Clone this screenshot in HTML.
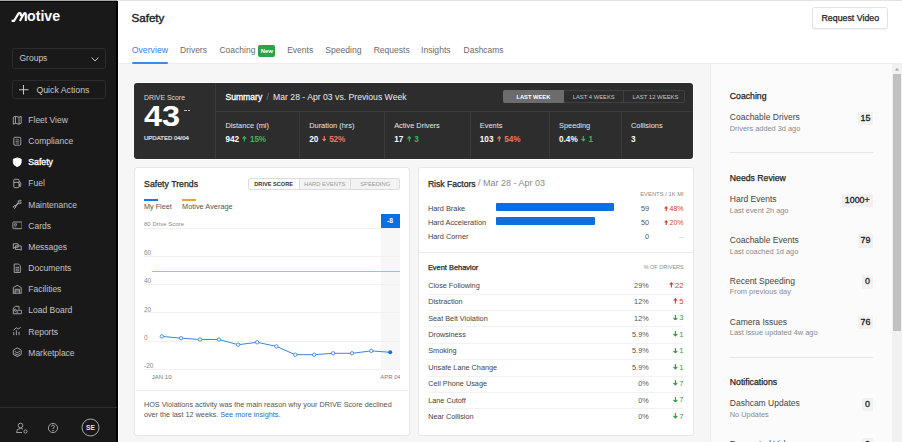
<!DOCTYPE html><html><head><meta charset="utf-8"><style>
html,body{margin:0;padding:0;width:902px;height:442px;overflow:hidden;background:#fff}
body{position:relative;font-family:"Liberation Sans",sans-serif}
.t{position:absolute;line-height:1;white-space:nowrap}
.r{position:absolute}
</style></head><body>
<div class="r" style="left:0px;top:0px;width:117px;height:1px;background:#a9a9a9"></div>
<div class="r" style="left:117px;top:0px;width:785px;height:1px;background:#e3e3e3"></div>
<div class="r" style="left:0px;top:1px;width:116px;height:441px;background:#191919"></div>
<div class="r" style="left:116px;top:1px;width:1.5999999999999943px;height:441px;background:#000"></div>
<div class="r" style="left:0px;top:1px;width:117px;height:1px;background:#000"></div>
<div class="r" style="left:117.6px;top:1px;width:784.4px;height:63px;background:#fff"></div>
<div class="r" style="left:117.6px;top:64px;width:1.4000000000000057px;height:378px;background:#fff"></div>
<div class="r" style="left:119px;top:64px;width:591px;height:378px;background:#f6f6f6"></div>
<div class="r" style="left:118px;top:63px;width:784px;height:1px;background:#efefef"></div>
<div class="r" style="left:710px;top:64px;width:182px;height:378px;background:#fbfbfb"></div>
<div class="r" style="left:710px;top:64px;width:1px;height:378px;background:#ececec"></div>
<div class="r" style="left:892px;top:64px;width:10px;height:378px;background:#f1f1f1"></div>
<div class="r" style="left:893px;top:74px;width:8px;height:257px;background:#c1c1c1"></div>
<svg class="r" style="left:892px;top:64px" width="10" height="10"><path d="M3 6.5 L5 4 L7 6.5Z" fill="#a3a3a3"/></svg>
<svg class="r" style="left:0;top:0" width="40" height="30" viewBox="0 0 40 30">
<path d="M11.6 20.9 H14 L18.3 13.9 Q18.8 13.1 19.6 13.1 H20 Q20.9 13.1 20.9 14 V16.3 M19.9 20.9 L23.7 14 Q24.1 13.1 24.9 13.1 Q25.8 13.1 25.8 14 V21" stroke="#fff" stroke-width="2.1" fill="none" stroke-linejoin="round"/>
</svg>
<div class="t" style="left:27.00px;top:9.18px;font-size:14.2px;color:#fff;font-weight:700;letter-spacing:0px">otive</div>
<div class="r" style="left:12px;top:48px;width:94px;height:21px;border:1px solid #2c2c2c;border-radius:3px;box-sizing:border-box"></div>
<div class="t" style="left:19.50px;top:54.20px;font-size:8.5px;color:#c8c8c8;font-weight:400;">Groups</div>
<svg class="r" style="left:90px;top:55px" width="10" height="8"><path d="M1.5 2.5 L5 6 L8.5 2.5" stroke="#bdbdbd" stroke-width="1" fill="none"/></svg>
<div class="r" style="left:12px;top:80px;width:94px;height:19px;border:1px solid #2c2c2c;border-radius:3px;box-sizing:border-box"></div>
<svg class="r" style="left:18px;top:84px" width="12" height="12"><path d="M5.5 1 V10.5 M1 5.75 H10.5" stroke="#c8c8c8" stroke-width="1" fill="none"/></svg>
<div class="t" style="left:36.40px;top:85.79px;font-size:8.75px;color:#c8c8c8;font-weight:400;">Quick Actions</div>
<div class="t" style="left:28.30px;top:116.00px;font-size:8.5px;color:#c4c4c4;font-weight:400;">Fleet View</div>
<div class="t" style="left:28.30px;top:137.15px;font-size:8.5px;color:#c4c4c4;font-weight:400;">Compliance</div>
<div class="t" style="left:28.30px;top:158.14px;font-size:8.7px;color:#fff;font-weight:400;-webkit-text-stroke:0.35px #fff;">Safety</div>
<div class="t" style="left:28.30px;top:179.45px;font-size:8.5px;color:#c4c4c4;font-weight:400;">Fuel</div>
<div class="t" style="left:28.30px;top:200.60px;font-size:8.5px;color:#c4c4c4;font-weight:400;">Maintenance</div>
<div class="t" style="left:28.30px;top:221.75px;font-size:8.5px;color:#c4c4c4;font-weight:400;">Cards</div>
<div class="t" style="left:28.30px;top:242.90px;font-size:8.5px;color:#c4c4c4;font-weight:400;">Messages</div>
<div class="t" style="left:28.30px;top:264.05px;font-size:8.5px;color:#c4c4c4;font-weight:400;">Documents</div>
<div class="t" style="left:28.30px;top:285.20px;font-size:8.5px;color:#c4c4c4;font-weight:400;">Facilities</div>
<div class="t" style="left:28.30px;top:306.35px;font-size:8.5px;color:#c4c4c4;font-weight:400;">Load Board</div>
<div class="t" style="left:28.30px;top:327.50px;font-size:8.5px;color:#c4c4c4;font-weight:400;">Reports</div>
<div class="t" style="left:28.30px;top:348.65px;font-size:8.5px;color:#c4c4c4;font-weight:400;">Marketplace</div>
<svg class="r" style="left:11.6px;top:114.60px" width="10.5" height="10.5" viewBox="0 0 12 12" fill="none" stroke="#ababab" stroke-width="1.05"><path d="M1.5 2.5 L4 1.5 L8 2.5 L10.5 1.5 V9.5 L8 10.5 L4 9.5 L1.5 10.5Z M4 1.5 V9.5 M8 2.5 V10.5"/></svg>
<svg class="r" style="left:11.6px;top:135.75px" width="10.5" height="10.5" viewBox="0 0 12 12" fill="none" stroke="#ababab" stroke-width="1.05"><rect x="2" y="1.5" width="8" height="9" rx="1.2"/><path d="M4 4.3 H8 M4 6.2 H8 M4 8.1 H8" stroke-width="0.8"/></svg>
<svg class="r" style="left:11.6px;top:156.90px" width="10.5" height="10.5" viewBox="0 0 12 12" fill="none" stroke="#ababab" stroke-width="1.05"><path d="M6 1 L10.5 2.5 V6 Q10.5 9.5 6 11 Q1.5 9.5 1.5 6 V2.5Z" fill="#fff" stroke="#fff"/></svg>
<svg class="r" style="left:11.6px;top:178.05px" width="10.5" height="10.5" viewBox="0 0 12 12" fill="none" stroke="#ababab" stroke-width="1.05"><rect x="2" y="1.5" width="6" height="9.5" rx="1"/><path d="M2 5 H8 M8 4 L10 5.5 V9 Q10 10 9.2 10 Q8.5 10 8.5 9 V7"/></svg>
<svg class="r" style="left:11.6px;top:199.20px" width="10.5" height="10.5" viewBox="0 0 12 12" fill="none" stroke="#ababab" stroke-width="1.05"><path d="M3.2 8.8 L7.4 4.6" stroke-width="1.5"/><path d="M7.1 2.2 Q8.6 0.9 10.4 1.7 L8.7 3.4 L8.7 3.4 L10.3 5 Q11.1 3.3 9.8 4.9 Q8.4 5.9 7.1 4.9 Z M1.2 9 L2.9 7.4 L4.6 9.1 L3 10.8Z"/></svg>
<svg class="r" style="left:11.6px;top:220.35px" width="10.5" height="10.5" viewBox="0 0 12 12" fill="none" stroke="#ababab" stroke-width="1.05"><rect x="1" y="2.3" width="10.5" height="7.6" rx="0.8"/><path d="M2.8 7.8 H5 M2.8 4.3 H5.2 V6 H2.8Z" stroke-width="0.8"/></svg>
<svg class="r" style="left:11.6px;top:241.50px" width="10.5" height="10.5" viewBox="0 0 12 12" fill="none" stroke="#ababab" stroke-width="1.05"><path d="M1.5 2 H7 V6 H3.5 L1.5 7.5Z M4 4.5 H10.5 V9.5 L9 8.5 H4Z"/></svg>
<svg class="r" style="left:11.6px;top:262.65px" width="10.5" height="10.5" viewBox="0 0 12 12" fill="none" stroke="#ababab" stroke-width="1.05"><path d="M2.5 1.2 H7.5 L9.5 3.2 V10.8 H2.5Z M4 5 H8 M4 7 H8 M4 9 H8"/></svg>
<svg class="r" style="left:11.6px;top:283.80px" width="10.5" height="10.5" viewBox="0 0 12 12" fill="none" stroke="#ababab" stroke-width="1.05"><path d="M1.5 10.5 V4 L6 1.5 L10.5 4 V10.5 M1 10.5 H11 M3.5 10.5 V6 H8.5 V10.5 M3.5 8 H8.5"/></svg>
<svg class="r" style="left:11.6px;top:304.95px" width="10.5" height="10.5" viewBox="0 0 12 12" fill="none" stroke="#ababab" stroke-width="1.05"><path d="M1.5 10 V3.5 L4 1.5 H8 V5 M1.5 10 H6"/><rect x="6" y="6" width="5" height="4" rx="0.5"/><circle cx="3.8" cy="6" r="1.2"/></svg>
<svg class="r" style="left:11.6px;top:326.10px" width="10.5" height="10.5" viewBox="0 0 12 12" fill="none" stroke="#ababab" stroke-width="1.05"><path d="M2 10.5 V7 M5 10.5 V5 M8 10.5 V6.5 M1.5 5 L5 2 L7 3.5 L10 1.5"/></svg>
<svg class="r" style="left:11.6px;top:347.25px" width="10.5" height="10.5" viewBox="0 0 12 12" fill="none" stroke="#ababab" stroke-width="1.05"><path d="M6 1 L10.5 3.5 V8.5 L6 11 L1.5 8.5 V3.5Z M3 5 L6 6.5 L9 5 M3 7.5 L6 9 L9 7.5"/></svg>
<div class="r" style="left:0px;top:407px;width:117px;height:1px;background:#2e2e2e"></div>
<svg class="r" style="left:15px;top:421px" width="14" height="14" viewBox="0 0 14 14" fill="none" stroke="#aaa" stroke-width="0.9"><circle cx="5.5" cy="4.5" r="2.3"/><path d="M1.5 11.5 Q1.5 7.5 5.5 7.5 Q7 7.5 8 8.2 M1.5 11.5 H7"/><circle cx="10.5" cy="10.5" r="1.6"/></svg>
<svg class="r" style="left:47px;top:422px" width="12" height="12" viewBox="0 0 12 12" fill="none" stroke="#aaa" stroke-width="0.9"><circle cx="6" cy="6" r="4.6"/><path d="M4.5 4.6 Q4.5 3.2 6 3.2 Q7.5 3.2 7.5 4.6 Q7.5 5.5 6 6.2 V7"/><circle cx="6" cy="8.6" r="0.4" fill="#aaa"/></svg>
<svg class="r" style="left:81px;top:418px" width="19" height="19" viewBox="0 0 19 19" fill="none"><circle cx="9.5" cy="9.5" r="8.5" stroke="#bbb" stroke-width="0.9"/></svg>
<div class="t" style="left:90.50px;transform:translateX(-50%);top:424.53px;font-size:6.7px;color:#e0e0e0;font-weight:700;">SE</div>
<div class="t" style="left:131.50px;top:12.18px;font-size:11.6px;color:#222;font-weight:400;-webkit-text-stroke:0.4px #222;">Safety</div>
<div class="t" style="left:131.70px;top:45.81px;font-size:8.73px;color:#2d86ec;font-weight:400;">Overview</div>
<div class="t" style="left:180.00px;top:45.98px;font-size:8.53px;color:#6b6b6b;font-weight:400;">Drivers</div>
<div class="t" style="left:219.40px;top:45.99px;font-size:8.52px;color:#6b6b6b;font-weight:400;">Coaching</div>
<div class="t" style="left:287.20px;top:46.00px;font-size:8.5px;color:#6b6b6b;font-weight:400;">Events</div>
<div class="t" style="left:325.20px;top:45.92px;font-size:8.6px;color:#6b6b6b;font-weight:400;">Speeding</div>
<div class="t" style="left:373.70px;top:45.99px;font-size:8.52px;color:#6b6b6b;font-weight:400;">Requests</div>
<div class="t" style="left:421.00px;top:45.92px;font-size:8.6px;color:#6b6b6b;font-weight:400;">Insights</div>
<div class="t" style="left:463.60px;top:46.03px;font-size:8.47px;color:#6b6b6b;font-weight:400;">Dashcams</div>
<div class="r" style="left:131.7px;top:62px;width:36.400000000000006px;height:2px;background:#3a8ceb;border-radius:1px"></div>
<div class="r" style="left:258px;top:45px;width:17.19999999999999px;height:11.5px;background:#2ba34a;border-radius:2px"></div>
<div class="t" style="left:266.80px;transform:translateX(-50%);top:47.82px;font-size:6.0px;color:#fff;font-weight:700;">New</div>
<div class="r" style="left:812px;top:7px;width:76px;height:22px;background:#fff;border:1px solid #e2e2e2;border-radius:3px;box-sizing:border-box;box-shadow:0 1px 1px rgba(0,0,0,0.06)"></div>
<div class="t" style="left:850.30px;transform:translateX(-50%);top:13.95px;font-size:8.8px;color:#222;font-weight:400;-webkit-text-stroke:0.25px #222;">Request Video</div>
<div class="r" style="left:134px;top:83px;width:559px;height:75.5px;background:#2d2d2d;border-radius:3px;box-shadow:0 0 0 1px #fff"></div>
<div class="r" style="left:215px;top:83px;width:1px;height:75.5px;background:#3b3b3b"></div>
<div class="r" style="left:216px;top:111px;width:477px;height:1px;background:#3b3b3b"></div>
<div class="r" style="left:299px;top:112px;width:1px;height:46.5px;background:#3b3b3b"></div>
<div class="r" style="left:384px;top:112px;width:1px;height:46.5px;background:#3b3b3b"></div>
<div class="r" style="left:470px;top:112px;width:1px;height:46.5px;background:#3b3b3b"></div>
<div class="r" style="left:549px;top:112px;width:1px;height:46.5px;background:#3b3b3b"></div>
<div class="r" style="left:621px;top:112px;width:1px;height:46.5px;background:#3b3b3b"></div>
<div class="t" style="left:144.00px;top:94.56px;font-size:6.9px;color:#dedede;font-weight:400;">DRIVE Score</div>
<div class="t" style="left:143.80px;top:100.83px;font-size:29.5px;color:#fff;font-weight:700;transform:scaleX(1.1);transform-origin:0 0">43</div>
<div class="r" style="left:184px;top:110px;width:2.5999999999999943px;height:1px;background:#bbb"></div>
<div class="r" style="left:187.6px;top:110px;width:2.5999999999999943px;height:1px;background:#bbb"></div>
<div class="t" style="left:144.00px;top:135.02px;font-size:6.0px;color:#e4e4e4;font-weight:400;-webkit-text-stroke:0.2px #e4e4e4;">UPDATED 04/04</div>
<div class="t" style="left:225.40px;top:93.48px;font-size:8.65px;color:#fff;font-weight:400;-webkit-text-stroke:0.3px #fff;">Summary</div>
<div class="t" style="left:266.40px;top:93.42px;font-size:8.6px;color:#777;font-weight:400;">/</div>
<div class="t" style="left:273.00px;top:93.37px;font-size:8.66px;color:#ececec;font-weight:400;">Mar 28 - Apr 03 vs. Previous Week</div>
<div class="r" style="left:503px;top:90px;width:181.60000000000002px;height:13px;border:1px solid #404040;border-radius:2px;box-sizing:border-box"></div>
<div class="r" style="left:503px;top:90px;width:61.200000000000045px;height:13px;background:#6c6c6c;border-radius:2px 0 0 2px"></div>
<div class="r" style="left:623.2px;top:90px;width:1.0px;height:13px;background:#404040"></div>
<div class="t" style="left:533.40px;transform:translateX(-50%);top:94.72px;font-size:5.77px;color:#fff;font-weight:700;">LAST WEEK</div>
<div class="t" style="left:593.70px;transform:translateX(-50%);top:94.66px;font-size:5.83px;color:#c6c6c6;font-weight:400;">LAST 4 WEEKS</div>
<div class="t" style="left:655.50px;transform:translateX(-50%);top:94.58px;font-size:5.93px;color:#c6c6c6;font-weight:400;">LAST 12 WEEKS</div>
<div class="t" style="left:225.40px;top:121.74px;font-size:7.4px;color:#e8e8e8;font-weight:400;">Distance (mi)</div>
<div class="t" style="left:225.40px;top:135.76px;font-size:8.2px;color:#fff;font-weight:700;">942<svg width="4.6" height="5.4" viewBox="0 0 4.6 5.4" style="display:inline-block;vertical-align:baseline;margin:0 3.0px 0 3.3px"><path d="M2.3 5.4 V0.9 M0.45 2.60 L2.3 0.7 L4.1499999999999995 2.60" stroke="#3fb55a" stroke-width="1.15" fill="none"/></svg><span style="color:#3fb55a;font-weight:700;font-size:8.2px;letter-spacing:-0.12px">15%</span></div>
<div class="t" style="left:309.20px;top:121.74px;font-size:7.4px;color:#e8e8e8;font-weight:400;">Duration (hrs)</div>
<div class="t" style="left:309.20px;top:135.76px;font-size:8.2px;color:#fff;font-weight:700;">20<svg width="4.6" height="5.4" viewBox="0 0 4.6 5.4" style="display:inline-block;vertical-align:baseline;margin:0 3.0px 0 3.3px"><path d="M2.3 0 V4.5 M0.45 2.80 L2.3 4.7 L4.1499999999999995 2.80" stroke="#e9785e" stroke-width="1.15" fill="none"/></svg><span style="color:#e9785e;font-weight:700;font-size:8.2px;letter-spacing:-0.12px">52%</span></div>
<div class="t" style="left:394.20px;top:121.74px;font-size:7.4px;color:#e8e8e8;font-weight:400;">Active Drivers</div>
<div class="t" style="left:394.20px;top:135.76px;font-size:8.2px;color:#fff;font-weight:700;">17<svg width="4.6" height="5.4" viewBox="0 0 4.6 5.4" style="display:inline-block;vertical-align:baseline;margin:0 3.0px 0 3.3px"><path d="M2.3 5.4 V0.9 M0.45 2.60 L2.3 0.7 L4.1499999999999995 2.60" stroke="#3fb55a" stroke-width="1.15" fill="none"/></svg><span style="color:#3fb55a;font-weight:700;font-size:8.2px;letter-spacing:-0.12px">3</span></div>
<div class="t" style="left:479.80px;top:121.74px;font-size:7.4px;color:#e8e8e8;font-weight:400;">Events</div>
<div class="t" style="left:479.80px;top:135.76px;font-size:8.2px;color:#fff;font-weight:700;">103<svg width="4.6" height="5.4" viewBox="0 0 4.6 5.4" style="display:inline-block;vertical-align:baseline;margin:0 3.0px 0 3.3px"><path d="M2.3 5.4 V0.9 M0.45 2.60 L2.3 0.7 L4.1499999999999995 2.60" stroke="#e9785e" stroke-width="1.15" fill="none"/></svg><span style="color:#e9785e;font-weight:700;font-size:8.2px;letter-spacing:-0.12px">54%</span></div>
<div class="t" style="left:559.00px;top:121.74px;font-size:7.4px;color:#e8e8e8;font-weight:400;">Speeding</div>
<div class="t" style="left:559.00px;top:135.76px;font-size:8.2px;color:#fff;font-weight:700;">0.4%<svg width="4.6" height="5.4" viewBox="0 0 4.6 5.4" style="display:inline-block;vertical-align:baseline;margin:0 3.0px 0 3.3px"><path d="M2.3 0 V4.5 M0.45 2.80 L2.3 4.7 L4.1499999999999995 2.80" stroke="#3fb55a" stroke-width="1.15" fill="none"/></svg><span style="color:#3fb55a;font-weight:700;font-size:8.2px;letter-spacing:-0.12px">1</span></div>
<div class="t" style="left:631.00px;top:121.74px;font-size:7.4px;color:#e8e8e8;font-weight:400;">Collisions</div>
<div class="t" style="left:631.00px;top:135.76px;font-size:8.2px;color:#fff;font-weight:700;">3</div>
<div class="r" style="left:134px;top:167px;width:276px;height:269px;background:#fff;border:1px solid #e8e8e8;border-radius:3px;box-sizing:border-box"></div>
<div class="t" style="left:144.10px;top:179.79px;font-size:8.75px;color:#222;font-weight:400;-webkit-text-stroke:0.25px #222;">Safety Trends</div>
<div class="r" style="left:248px;top:178px;width:152px;height:11.699999999999989px;border:1px solid #dcdcdc;border-radius:2px;box-sizing:border-box;background:#f3f3f3"></div>
<div class="r" style="left:249px;top:179px;width:50.19999999999999px;height:9.699999999999989px;background:#fff"></div>
<div class="r" style="left:299.2px;top:178px;width:1.0px;height:11.699999999999989px;background:#dcdcdc"></div>
<div class="r" style="left:349.6px;top:178px;width:1.0px;height:11.699999999999989px;background:#dcdcdc"></div>
<div class="t" style="left:273.70px;transform:translateX(-50%);top:182.13px;font-size:5.63px;color:#333;font-weight:700;">DRIVE SCORE</div>
<div class="t" style="left:324.70px;transform:translateX(-50%);top:181.99px;font-size:5.8px;color:#9a9a9a;font-weight:400;">HARD EVENTS</div>
<div class="t" style="left:375.20px;transform:translateX(-50%);top:181.99px;font-size:5.8px;color:#9a9a9a;font-weight:400;">SPEEDING</div>
<div class="r" style="left:144px;top:199px;width:14px;height:1.5px;background:#1a73e8"></div>
<div class="r" style="left:182px;top:199px;width:14px;height:1.5px;background:#e8a33a"></div>
<div class="t" style="left:144.00px;top:202.76px;font-size:7.25px;color:#555;font-weight:400;">My Fleet</div>
<div class="t" style="left:182.00px;top:202.65px;font-size:7.38px;color:#555;font-weight:400;">Motive Average</div>
<div class="r" style="left:380.5px;top:228.5px;width:19.19999999999999px;height:141.0px;background:#f7f7f7"></div>
<div class="r" style="left:380.5px;top:214px;width:19.19999999999999px;height:14.5px;background:#0a6fe0"></div>
<div class="t" style="left:390.10px;transform:translateX(-50%);top:218.04px;font-size:6.8px;color:#fff;font-weight:700;">-8</div>
<div class="r" style="left:144px;top:227.7px;width:256px;height:1.0px;background:#f1f1f1"></div>
<div class="t" style="left:144.00px;top:220.98px;font-size:6.05px;color:#8a8a8a;font-weight:400;">80 Drive Score</div>
<div class="r" style="left:144px;top:255.9px;width:256px;height:0.9999999999999716px;background:#f1f1f1"></div>
<div class="t" style="left:144.00px;top:250.10px;font-size:6.5px;color:#8a8a8a;font-weight:400;">60</div>
<div class="r" style="left:144px;top:284.1px;width:256px;height:1.0px;background:#f1f1f1"></div>
<div class="t" style="left:144.00px;top:278.30px;font-size:6.5px;color:#8a8a8a;font-weight:400;">40</div>
<div class="r" style="left:144px;top:312.3px;width:256px;height:1.0px;background:#f1f1f1"></div>
<div class="t" style="left:144.00px;top:306.50px;font-size:6.5px;color:#8a8a8a;font-weight:400;">20</div>
<div class="r" style="left:144px;top:340.5px;width:256px;height:1.0px;background:#f1f1f1"></div>
<div class="t" style="left:144.00px;top:334.70px;font-size:6.5px;color:#8a8a8a;font-weight:400;">0</div>
<div class="r" style="left:144px;top:368.7px;width:256px;height:1.0px;background:#f1f1f1"></div>
<div class="t" style="left:144.00px;top:362.90px;font-size:6.5px;color:#8a8a8a;font-weight:400;">-20</div>
<div class="r" style="left:152px;top:270.7px;width:248px;height:1.1999999999999886px;background:#e8b455"></div>
<svg class="r" style="left:0;top:0" width="902" height="442"><path d="M161.8 336.4 L181.1 338.2 L200.0 339.5 L218.9 339.5 L238.2 344.7 L257.1 342.3 L276.4 346.4 L295.3 354.7 L314.2 354.7 L333.1 353.3 L352.0 353.3 L371.3 350.9 L390.2 352.3" stroke="#3b86e0" stroke-width="1" fill="none"/><circle cx="161.8" cy="336.4" r="1.7" fill="#fff" stroke="#3b86e0" stroke-width="0.9"/><circle cx="181.1" cy="338.2" r="1.7" fill="#fff" stroke="#3b86e0" stroke-width="0.9"/><circle cx="200" cy="339.5" r="1.7" fill="#fff" stroke="#3b86e0" stroke-width="0.9"/><circle cx="218.9" cy="339.5" r="1.7" fill="#fff" stroke="#3b86e0" stroke-width="0.9"/><circle cx="238.2" cy="344.7" r="1.7" fill="#fff" stroke="#3b86e0" stroke-width="0.9"/><circle cx="257.1" cy="342.3" r="1.7" fill="#fff" stroke="#3b86e0" stroke-width="0.9"/><circle cx="276.4" cy="346.4" r="1.7" fill="#fff" stroke="#3b86e0" stroke-width="0.9"/><circle cx="295.3" cy="354.7" r="1.7" fill="#fff" stroke="#3b86e0" stroke-width="0.9"/><circle cx="314.2" cy="354.7" r="1.7" fill="#fff" stroke="#3b86e0" stroke-width="0.9"/><circle cx="333.1" cy="353.3" r="1.7" fill="#fff" stroke="#3b86e0" stroke-width="0.9"/><circle cx="352" cy="353.3" r="1.7" fill="#fff" stroke="#3b86e0" stroke-width="0.9"/><circle cx="371.3" cy="350.9" r="1.7" fill="#fff" stroke="#3b86e0" stroke-width="0.9"/><circle cx="390.2" cy="352.3" r="2" fill="#1a6fd6"/></svg>
<div class="t" style="left:151.80px;top:373.62px;font-size:6.0px;color:#777;font-weight:400;">JAN 10</div>
<div class="r" style="left:380px;top:370px;width:20px;height:12px;overflow:hidden">
<div class="t" style="left:0.2px;top:3.62px;font-size:6px;color:#777">APR 04</div></div>
<div class="r" style="left:135.5px;top:390px;width:272.5px;height:1px;background:#ececec"></div>
<div class="t" style="left:143.90px;top:400.84px;font-size:7.28px;color:#555;font-weight:400;">HOS Violations activity was the main reason why your DRIVE Score declined</div>
<div class="t" style="left:143.90px;top:411.14px;font-size:7.28px;color:#555;font-weight:400;">over the last 12 weeks. <span style="color:#1a6fd6">See more insights.</span></div>
<div class="r" style="left:418px;top:167px;width:276px;height:269px;background:#fff;border:1px solid #e8e8e8;border-radius:3px;box-sizing:border-box"></div>
<div class="t" style="left:427.90px;top:179.52px;font-size:8.6px;color:#222;font-weight:400;-webkit-text-stroke:0.25px #222;">Risk Factors</div>
<div class="t" style="left:478.00px;top:179.18px;font-size:9.0px;color:#8a8a8a;font-weight:400;">/ Mar 28 - Apr 03</div>
<div class="t" style="right:218.30px;top:192.35px;font-size:5.85px;color:#8a8a8a;font-weight:400;">EVENTS / 1K MI</div>
<div class="t" style="left:427.90px;top:205.04px;font-size:7.39px;color:#444;font-weight:400;">Hard Brake</div>
<div class="r" style="left:495.6px;top:203.4px;width:118.60000000000002px;height:7.300000000000011px;background:#0a6fe0;border-radius:1px"></div>
<div class="t" style="right:253.00px;top:204.62px;font-size:7.3px;color:#555;font-weight:400;">59</div>
<div class="t" style="right:218.50px;top:204.87px;font-size:7.0px;color:#e03a2e;font-weight:400;"><svg width="4.4" height="5.2" viewBox="0 0 4.4 5.2" style="display:inline-block;vertical-align:baseline;margin:0 1.2px 0 0px"><path d="M2.2 0 L4.4 2.6 H2.80 V5.2 H1.60 V2.6 H0 Z" fill="#e03a2e"/></svg>48%</div>
<div class="t" style="left:427.90px;top:219.04px;font-size:7.39px;color:#444;font-weight:400;">Hard Acceleration</div>
<div class="r" style="left:495.6px;top:217.4px;width:99.60000000000002px;height:7.300000000000011px;background:#0a6fe0;border-radius:1px"></div>
<div class="t" style="right:253.00px;top:218.62px;font-size:7.3px;color:#555;font-weight:400;">50</div>
<div class="t" style="right:218.50px;top:218.87px;font-size:7.0px;color:#e03a2e;font-weight:400;"><svg width="4.4" height="5.2" viewBox="0 0 4.4 5.2" style="display:inline-block;vertical-align:baseline;margin:0 1.2px 0 0px"><path d="M2.2 0 L4.4 2.6 H2.80 V5.2 H1.60 V2.6 H0 Z" fill="#e03a2e"/></svg>20%</div>
<div class="t" style="left:427.90px;top:233.14px;font-size:7.39px;color:#444;font-weight:400;">Hard Corner</div>
<div class="t" style="right:253.00px;top:232.72px;font-size:7.3px;color:#555;font-weight:400;">0</div>
<div class="t" style="right:218.50px;top:232.97px;font-size:7.0px;color:#bbb;font-weight:400;">--</div>
<div class="r" style="left:419px;top:251.5px;width:274px;height:1.0px;background:#ececec"></div>
<div class="t" style="left:427.90px;top:263.99px;font-size:7.45px;color:#2a2a2a;font-weight:400;-webkit-text-stroke:0.25px #2a2a2a;">Event Behavior</div>
<div class="t" style="right:218.30px;top:265.44px;font-size:5.5px;color:#8a8a8a;font-weight:400;">% OF DRIVERS</div>
<div class="t" style="left:428.20px;top:281.82px;font-size:7.3px;color:#444;font-weight:400;">Close Following</div>
<div class="t" style="right:253.30px;top:281.82px;font-size:7.3px;color:#555;font-weight:400;">29%</div>
<div class="t" style="right:218.50px;top:281.57px;font-size:7.6px;color:#e03a2e;font-weight:400;"><svg width="4.8" height="5.6" viewBox="0 0 4.8 5.6" style="display:inline-block;vertical-align:baseline;margin:0 1.3px 0 0px"><path d="M2.4 0 L4.8 2.6 H3.00 V5.6 H1.80 V2.6 H0 Z" fill="#e03a2e"/></svg>22</div>
<div class="r" style="left:428.2px;top:293.5px;width:255.3px;height:1.0px;background:#f2f2f2"></div>
<div class="t" style="left:428.20px;top:298.23px;font-size:7.3px;color:#444;font-weight:400;">Distraction</div>
<div class="t" style="right:253.30px;top:298.23px;font-size:7.3px;color:#555;font-weight:400;">12%</div>
<div class="t" style="right:218.50px;top:297.98px;font-size:7.6px;color:#e03a2e;font-weight:400;"><svg width="4.8" height="5.6" viewBox="0 0 4.8 5.6" style="display:inline-block;vertical-align:baseline;margin:0 1.3px 0 0px"><path d="M2.4 0 L4.8 2.6 H3.00 V5.6 H1.80 V2.6 H0 Z" fill="#e03a2e"/></svg>5</div>
<div class="r" style="left:428.2px;top:309.91px;width:255.3px;height:1.0px;background:#f2f2f2"></div>
<div class="t" style="left:428.20px;top:314.64px;font-size:7.3px;color:#444;font-weight:400;">Seat Belt Violation</div>
<div class="t" style="right:253.30px;top:314.64px;font-size:7.3px;color:#555;font-weight:400;">12%</div>
<div class="t" style="right:218.50px;top:314.39px;font-size:7.6px;color:#2e9a48;font-weight:400;"><svg width="4.8" height="5.6" viewBox="0 0 4.8 5.6" style="display:inline-block;vertical-align:baseline;margin:0 1.2px 0 0px"><path d="M2.4 0 V4.699999999999999 M0.45 2.90 L2.4 4.8999999999999995 L4.35 2.90" stroke="#2e9a48" stroke-width="1.1" fill="none"/></svg>3</div>
<div class="r" style="left:428.2px;top:326.32px;width:255.3px;height:1.0px;background:#f2f2f2"></div>
<div class="t" style="left:428.20px;top:331.05px;font-size:7.3px;color:#444;font-weight:400;">Drowsiness</div>
<div class="t" style="right:253.30px;top:331.05px;font-size:7.3px;color:#555;font-weight:400;">5.9%</div>
<div class="t" style="right:218.50px;top:330.80px;font-size:7.6px;color:#2e9a48;font-weight:400;"><svg width="4.8" height="5.6" viewBox="0 0 4.8 5.6" style="display:inline-block;vertical-align:baseline;margin:0 1.2px 0 0px"><path d="M2.4 0 V4.699999999999999 M0.45 2.90 L2.4 4.8999999999999995 L4.35 2.90" stroke="#2e9a48" stroke-width="1.1" fill="none"/></svg>1</div>
<div class="r" style="left:428.2px;top:342.73px;width:255.3px;height:1.0px;background:#f2f2f2"></div>
<div class="t" style="left:428.20px;top:347.46px;font-size:7.3px;color:#444;font-weight:400;">Smoking</div>
<div class="t" style="right:253.30px;top:347.46px;font-size:7.3px;color:#555;font-weight:400;">5.9%</div>
<div class="t" style="right:218.50px;top:347.21px;font-size:7.6px;color:#2e9a48;font-weight:400;"><svg width="4.8" height="5.6" viewBox="0 0 4.8 5.6" style="display:inline-block;vertical-align:baseline;margin:0 1.2px 0 0px"><path d="M2.4 0 V4.699999999999999 M0.45 2.90 L2.4 4.8999999999999995 L4.35 2.90" stroke="#2e9a48" stroke-width="1.1" fill="none"/></svg>1</div>
<div class="r" style="left:428.2px;top:359.14px;width:255.3px;height:1.0px;background:#f2f2f2"></div>
<div class="t" style="left:428.20px;top:363.87px;font-size:7.3px;color:#444;font-weight:400;">Unsafe Lane Change</div>
<div class="t" style="right:253.30px;top:363.87px;font-size:7.3px;color:#555;font-weight:400;">5.9%</div>
<div class="t" style="right:218.50px;top:363.62px;font-size:7.6px;color:#2e9a48;font-weight:400;"><svg width="4.8" height="5.6" viewBox="0 0 4.8 5.6" style="display:inline-block;vertical-align:baseline;margin:0 1.2px 0 0px"><path d="M2.4 0 V4.699999999999999 M0.45 2.90 L2.4 4.8999999999999995 L4.35 2.90" stroke="#2e9a48" stroke-width="1.1" fill="none"/></svg>1</div>
<div class="r" style="left:428.2px;top:375.55px;width:255.3px;height:1.0px;background:#f2f2f2"></div>
<div class="t" style="left:428.20px;top:380.28px;font-size:7.3px;color:#444;font-weight:400;">Cell Phone Usage</div>
<div class="t" style="right:253.30px;top:380.28px;font-size:7.3px;color:#555;font-weight:400;">0%</div>
<div class="t" style="right:218.50px;top:380.03px;font-size:7.6px;color:#2e9a48;font-weight:400;"><svg width="4.8" height="5.6" viewBox="0 0 4.8 5.6" style="display:inline-block;vertical-align:baseline;margin:0 1.2px 0 0px"><path d="M2.4 0 V4.699999999999999 M0.45 2.90 L2.4 4.8999999999999995 L4.35 2.90" stroke="#2e9a48" stroke-width="1.1" fill="none"/></svg>7</div>
<div class="r" style="left:428.2px;top:391.96000000000004px;width:255.3px;height:1.0px;background:#f2f2f2"></div>
<div class="t" style="left:428.20px;top:396.69px;font-size:7.3px;color:#444;font-weight:400;">Lane Cutoff</div>
<div class="t" style="right:253.30px;top:396.69px;font-size:7.3px;color:#555;font-weight:400;">0%</div>
<div class="t" style="right:218.50px;top:396.44px;font-size:7.6px;color:#2e9a48;font-weight:400;"><svg width="4.8" height="5.6" viewBox="0 0 4.8 5.6" style="display:inline-block;vertical-align:baseline;margin:0 1.2px 0 0px"><path d="M2.4 0 V4.699999999999999 M0.45 2.90 L2.4 4.8999999999999995 L4.35 2.90" stroke="#2e9a48" stroke-width="1.1" fill="none"/></svg>7</div>
<div class="r" style="left:428.2px;top:408.37px;width:255.3px;height:1.0px;background:#f2f2f2"></div>
<div class="t" style="left:428.20px;top:413.10px;font-size:7.3px;color:#444;font-weight:400;">Near Collision</div>
<div class="t" style="right:253.30px;top:413.10px;font-size:7.3px;color:#555;font-weight:400;">0%</div>
<div class="t" style="right:218.50px;top:412.85px;font-size:7.6px;color:#2e9a48;font-weight:400;"><svg width="4.8" height="5.6" viewBox="0 0 4.8 5.6" style="display:inline-block;vertical-align:baseline;margin:0 1.2px 0 0px"><path d="M2.4 0 V4.699999999999999 M0.45 2.90 L2.4 4.8999999999999995 L4.35 2.90" stroke="#2e9a48" stroke-width="1.1" fill="none"/></svg>7</div>
<div class="t" style="left:729.80px;top:92.44px;font-size:8.7px;color:#222;font-weight:400;-webkit-text-stroke:0.25px #222;">Coaching</div>
<div class="t" style="left:729.80px;top:113.40px;font-size:8.5px;color:#444;font-weight:400;">Coachable Drivers</div>
<div class="t" style="left:729.80px;top:124.94px;font-size:7.39px;color:#8a8a8a;font-weight:400;">Drivers added 3d ago</div>
<div class="r" style="left:858.1px;top:111.6px;width:14.899999999999977px;height:13.599999999999994px;background:#f1f1f1;border-radius:1px"></div>
<div class="t" style="left:865.55px;transform:translateX(-50%);top:113.67px;font-size:8.9px;color:#222;font-weight:400;-webkit-text-stroke:0.3px #222;">15</div>
<div class="r" style="left:729.8px;top:152px;width:143.20000000000005px;height:1px;background:#e6e6e6"></div>
<div class="t" style="left:729.80px;top:173.84px;font-size:8.7px;color:#222;font-weight:400;-webkit-text-stroke:0.25px #222;">Needs Review</div>
<div class="t" style="left:729.80px;top:195.40px;font-size:8.5px;color:#444;font-weight:400;">Hard Events</div>
<div class="t" style="left:729.80px;top:206.94px;font-size:7.39px;color:#8a8a8a;font-weight:400;">Last event 2h ago</div>
<div class="r" style="left:841.5px;top:193.6px;width:31.5px;height:13.599999999999994px;background:#f1f1f1;border-radius:1px"></div>
<div class="t" style="left:857.25px;transform:translateX(-50%);top:195.67px;font-size:8.9px;color:#222;font-weight:400;-webkit-text-stroke:0.3px #222;">1000+</div>
<div class="t" style="left:729.80px;top:236.10px;font-size:8.5px;color:#444;font-weight:400;">Coachable Events</div>
<div class="t" style="left:729.80px;top:247.64px;font-size:7.39px;color:#8a8a8a;font-weight:400;">Last coached 1d ago</div>
<div class="r" style="left:858px;top:234.3px;width:15px;height:13.599999999999994px;background:#f1f1f1;border-radius:1px"></div>
<div class="t" style="left:865.50px;transform:translateX(-50%);top:236.37px;font-size:8.9px;color:#222;font-weight:400;-webkit-text-stroke:0.3px #222;">79</div>
<div class="t" style="left:729.80px;top:276.90px;font-size:8.5px;color:#444;font-weight:400;">Recent Speeding</div>
<div class="t" style="left:729.80px;top:288.44px;font-size:7.39px;color:#8a8a8a;font-weight:400;">From previous day</div>
<div class="r" style="left:862px;top:275.1px;width:11px;height:13.600000000000023px;background:#f1f1f1;border-radius:1px"></div>
<div class="t" style="left:867.50px;transform:translateX(-50%);top:277.17px;font-size:8.9px;color:#222;font-weight:400;-webkit-text-stroke:0.3px #222;">0</div>
<div class="t" style="left:729.80px;top:317.60px;font-size:8.5px;color:#444;font-weight:400;">Camera Issues</div>
<div class="t" style="left:729.80px;top:329.14px;font-size:7.39px;color:#8a8a8a;font-weight:400;">Last issue updated 4w ago</div>
<div class="r" style="left:858px;top:315.8px;width:15px;height:13.600000000000023px;background:#f1f1f1;border-radius:1px"></div>
<div class="t" style="left:865.50px;transform:translateX(-50%);top:317.87px;font-size:8.9px;color:#222;font-weight:400;-webkit-text-stroke:0.3px #222;">76</div>
<div class="r" style="left:729.8px;top:356.5px;width:143.20000000000005px;height:1.0px;background:#e6e6e6"></div>
<div class="t" style="left:729.80px;top:378.04px;font-size:8.7px;color:#222;font-weight:400;-webkit-text-stroke:0.25px #222;">Notifications</div>
<div class="t" style="left:729.80px;top:399.40px;font-size:8.5px;color:#444;font-weight:400;">Dashcam Updates</div>
<div class="t" style="left:729.80px;top:410.94px;font-size:7.39px;color:#8a8a8a;font-weight:400;">No Updates</div>
<div class="r" style="left:862px;top:397.6px;width:11px;height:13.600000000000023px;background:#f1f1f1;border-radius:1px"></div>
<div class="t" style="left:867.50px;transform:translateX(-50%);top:399.67px;font-size:8.9px;color:#222;font-weight:400;-webkit-text-stroke:0.3px #222;">0</div>
<div class="t" style="left:729.80px;top:440.20px;font-size:8.5px;color:#444;font-weight:400;">Requested Videos</div>
<div class="t" style="left:729.80px;top:451.74px;font-size:7.39px;color:#8a8a8a;font-weight:400;">x</div>
<div class="r" style="left:862px;top:438.4px;width:11px;height:13.600000000000023px;background:#f1f1f1;border-radius:1px"></div>
<div class="t" style="left:867.50px;transform:translateX(-50%);top:440.47px;font-size:8.9px;color:#222;font-weight:400;-webkit-text-stroke:0.3px #222;">0</div>
</body></html>
